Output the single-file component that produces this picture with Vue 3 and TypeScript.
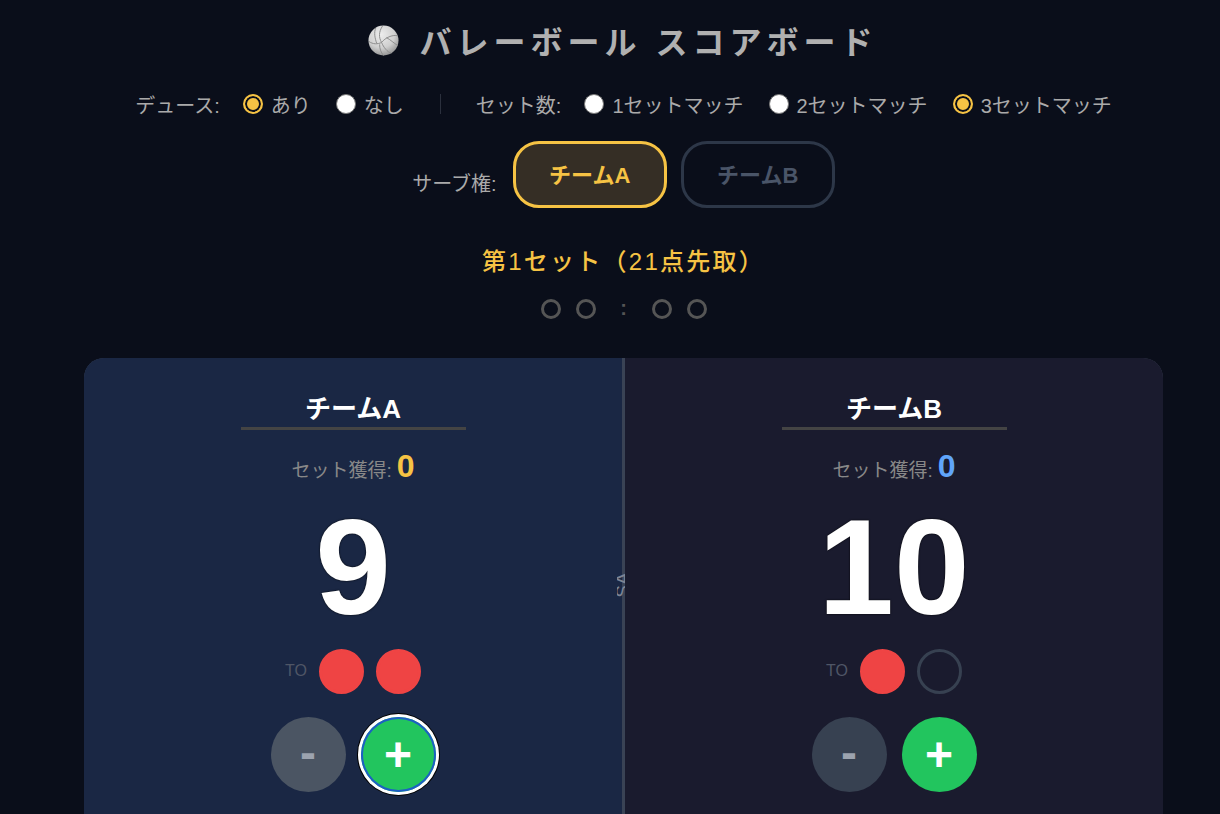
<script setup lang="ts">
interface Team { name: string; sets: number; score: number; to: boolean[]; cls: string }
const teams: Team[] = [
  { name: 'チームA', sets: 0, score: 9, to: [true, true], cls: 'a' },
  { name: 'チームB', sets: 0, score: 10, to: [true, false], cls: 'b' },
]
const matchOptions = [
  { label: '1セットマッチ', on: false },
  { label: '2セットマッチ', on: false },
  { label: '3セットマッチ', on: true },
]
</script>

<template>
  <main class="page">
    <h1 class="title">
      <svg class="ball" viewBox="0 0 32 32" aria-hidden="true">
        <defs>
          <radialGradient id="ballFill" cx="42%" cy="30%" r="75%">
            <stop offset="0" stop-color="#ededed" />
            <stop offset="0.6" stop-color="#cfcfcf" />
            <stop offset="1" stop-color="#8e8e8e" />
          </radialGradient>
        </defs>
        <circle cx="16" cy="16" r="15.5" fill="url(#ballFill)" />
        <g fill="none" stroke="#8c8c8c" stroke-width="1">
          <path d="M14 18 C18 13 25 10 30 11" />
          <path d="M14 18 C11 13 11 7 15 1" />
          <path d="M14 18 C16 23 20 28 24 29" />
          <path d="M14 18 C10 20 5 20 1 17" />
          <path d="M8 3 C6 8 7 13 9 19" />
          <path d="M19 13 C23 15 27 19 30.5 21" />
          <path d="M12 20 C12 24 13 28 16 31.5" />
        </g>
      </svg>
      <span class="title-text">バレーボール スコアボード</span>
    </h1>

    <section class="options">
      <span class="opt-label">デュース:</span>
      <label class="radio"><input type="radio" name="deuce" checked /><span>あり</span></label>
      <label class="radio"><input type="radio" name="deuce" /><span>なし</span></label>
      <span class="sep"></span>
      <span class="opt-label">セット数:</span>
      <label v-for="m in matchOptions" :key="m.label" class="radio">
        <input type="radio" name="match" :checked="m.on" /><span>{{ m.label }}</span>
      </label>
    </section>

    <section class="serve">
      <span class="serve-label">サーブ権:</span>
      <button class="serve-btn active" type="button">チームA</button>
      <button class="serve-btn" type="button">チームB</button>
    </section>

    <p class="set-title">第1セット（21点先取）</p>

    <div class="dots">
      <i class="dot"></i><i class="dot"></i>
      <span class="colon">:</span>
      <i class="dot"></i><i class="dot"></i>
    </div>

    <section class="board">
      <div v-for="t in teams" :key="t.name" class="panel" :class="t.cls">
        <div class="team-name">{{ t.name }}</div>
        <div class="sets">セット獲得: <b class="sets-num">{{ t.sets }}</b></div>
        <div class="score">{{ t.score }}</div>
        <div class="timeouts">
          <span class="to-label">TO</span>
          <i v-for="(used, i) in t.to" :key="i" class="to" :class="{ used }"></i>
        </div>
        <div class="buttons">
          <button class="minus" type="button">-</button>
          <button class="plus" type="button">+</button>
        </div>
      </div>
      <div class="divider"><span class="swap">SA</span></div>
    </section>
  </main>
</template>

<style scoped>
.page {
  box-sizing: border-box;
  height: 814px;
  overflow: hidden;
  padding: 20px 57px 0 84px;
  background: #0a0e1a;
  color: #aaa;
  font-family: "Liberation Sans", "Noto Sans CJK JP", sans-serif;
}
.title {
  display: flex;
  justify-content: center;
  align-items: center;
  gap: 21px;
  margin: 0;
  height: 40px;
  font-size: 32px;
  font-weight: 700;
  letter-spacing: 5px;
  color: #b0b0b0;
}
.ball { width: 31px; height: 31px; flex: none; margin-left: -2px; }
.options {
  display: flex;
  justify-content: center;
  align-items: center;
  margin-top: 31px;
  height: 26px;
  font-size: 20px;
  color: #aaa;
}
.opt-label { margin-right: 23px; }
.radio { display: flex; align-items: center; gap: 8px; margin-right: 25px; }
.radio:last-child { margin-right: 0; }
.radio input {
  appearance: none;
  box-sizing: border-box;
  width: 20px;
  height: 20px;
  margin: 0;
  border-radius: 50%;
  background: #fff;
  border: 1px solid #777;
}
.radio input:checked {
  background: #f6c344;
  border: 2px solid #f6c344;
  box-shadow: inset 0 0 0 2px #0a0e1a;
}
.sep { width: 1px; height: 20px; background: #2b303d; margin: 0 35px 0 11px; }
.serve {
  display: flex;
  justify-content: center;
  align-items: center;
  gap: 15px;
  margin-top: 24px;
}
.serve-label { font-size: 20px; color: #aaa; margin: 15px 1px 0 0; }
.serve-btn {
  width: 154px;
  height: 67px;
  padding: 0 0 4px;
  border: 3px solid #2d3748;
  border-radius: 26px;
  background: transparent;
  color: #4a5568;
  font-family: inherit;
  font-size: 22px;
  font-weight: 700;
}
.serve-btn + .serve-btn { margin-left: -1px; }
.serve-btn.active { border-color: #f6c344; background: #352e25; color: #f6c344; }
.set-title {
  margin: 37px 0 0;
  text-align: center;
  font-size: 24px;
  font-weight: 500;
  line-height: 34px;
  letter-spacing: 2.25px;
  color: #f6c344;
}
.dots {
  display: flex;
  justify-content: center;
  align-items: center;
  gap: 15px;
  margin-top: 19px;
  height: 22px;
}
.dot {
  box-sizing: border-box;
  width: 20px;
  height: 20px;
  border: 3px solid #555;
  border-radius: 50%;
}
.colon { color: #555; font-size: 20px; font-weight: 700; width: 16px; text-align: center; margin: -2px 5px 0; }
.board {
  position: relative;
  display: grid;
  grid-template-columns: 1fr 1fr;
  gap: 3px;
  margin-top: 38px;
  width: 1079px;
  height: 500px;
  border-radius: 20px;
  overflow: hidden;
  background: #3a4355;
}
.panel {
  display: flex;
  flex-direction: column;
  align-items: center;
  padding-top: 32px;
}
.panel.a { background: #1a2744; }
.panel.b { background: #1a1b2e; }
.team-name {
  width: 225px;
  height: 37px;
  border-bottom: 3px solid #444;
  text-align: center;
  font-size: 26px;
  line-height: 38px;
  font-weight: 700;
  color: #fff;
}
.sets {
  display: flex;
  align-items: baseline;
  gap: 5px;
  margin-top: 18px;
  height: 42px;
  font-size: 19px;
  color: #888;
}
.sets-num { font-size: 32px; font-weight: 700; }
.a .sets-num { color: #f6c344; }
.b .sets-num { color: #60a5fa; }
.score {
  margin-top: -1px;
  height: 156px;
  font-size: 136px;
  line-height: 156px;
  font-weight: 700;
  color: #fff;
  text-shadow: 0 0 2px #000;
}
.timeouts {
  display: flex;
  align-items: center;
  gap: 12px;
  margin-top: 3px;
  height: 46px;
}
.to-label { font-size: 16px; color: #4f5666; }
.to {
  box-sizing: border-box;
  width: 45px;
  height: 45px;
  border: 3px solid #374151;
  border-radius: 50%;
}
.to.used { background: #ef4444; border-color: #ef4444; }
.buttons { display: flex; gap: 15px; margin-top: 23px; }
.buttons button {
  width: 75px;
  height: 75px;
  padding: 0;
  border: 0;
  border-radius: 50%;
  font-family: inherit;
  font-size: 48px;
  line-height: 75px;
  font-weight: 700;
}
.buttons .minus { background: #374151; color: #9ca3af; padding-bottom: 3px; line-height: 72px; }
.a .buttons .minus { background: #4b5563; }
.plus { background: #22c55e; color: #fff; }
.a .plus { box-shadow: inset 0 0 0 2px #1d5fc4, 0 0 0 3px #fff, 0 0 0 4px #000; }
.divider {
  position: absolute;
  top: 0;
  bottom: 0;
  left: 533px;
  width: 8px;
  overflow: hidden;
}
.swap {
  position: absolute;
  top: 217px;
  left: -7px;
  color: #7d8494;
  font-size: 19px;
  line-height: 20px;
  transform: rotate(-90deg);
}
</style>
